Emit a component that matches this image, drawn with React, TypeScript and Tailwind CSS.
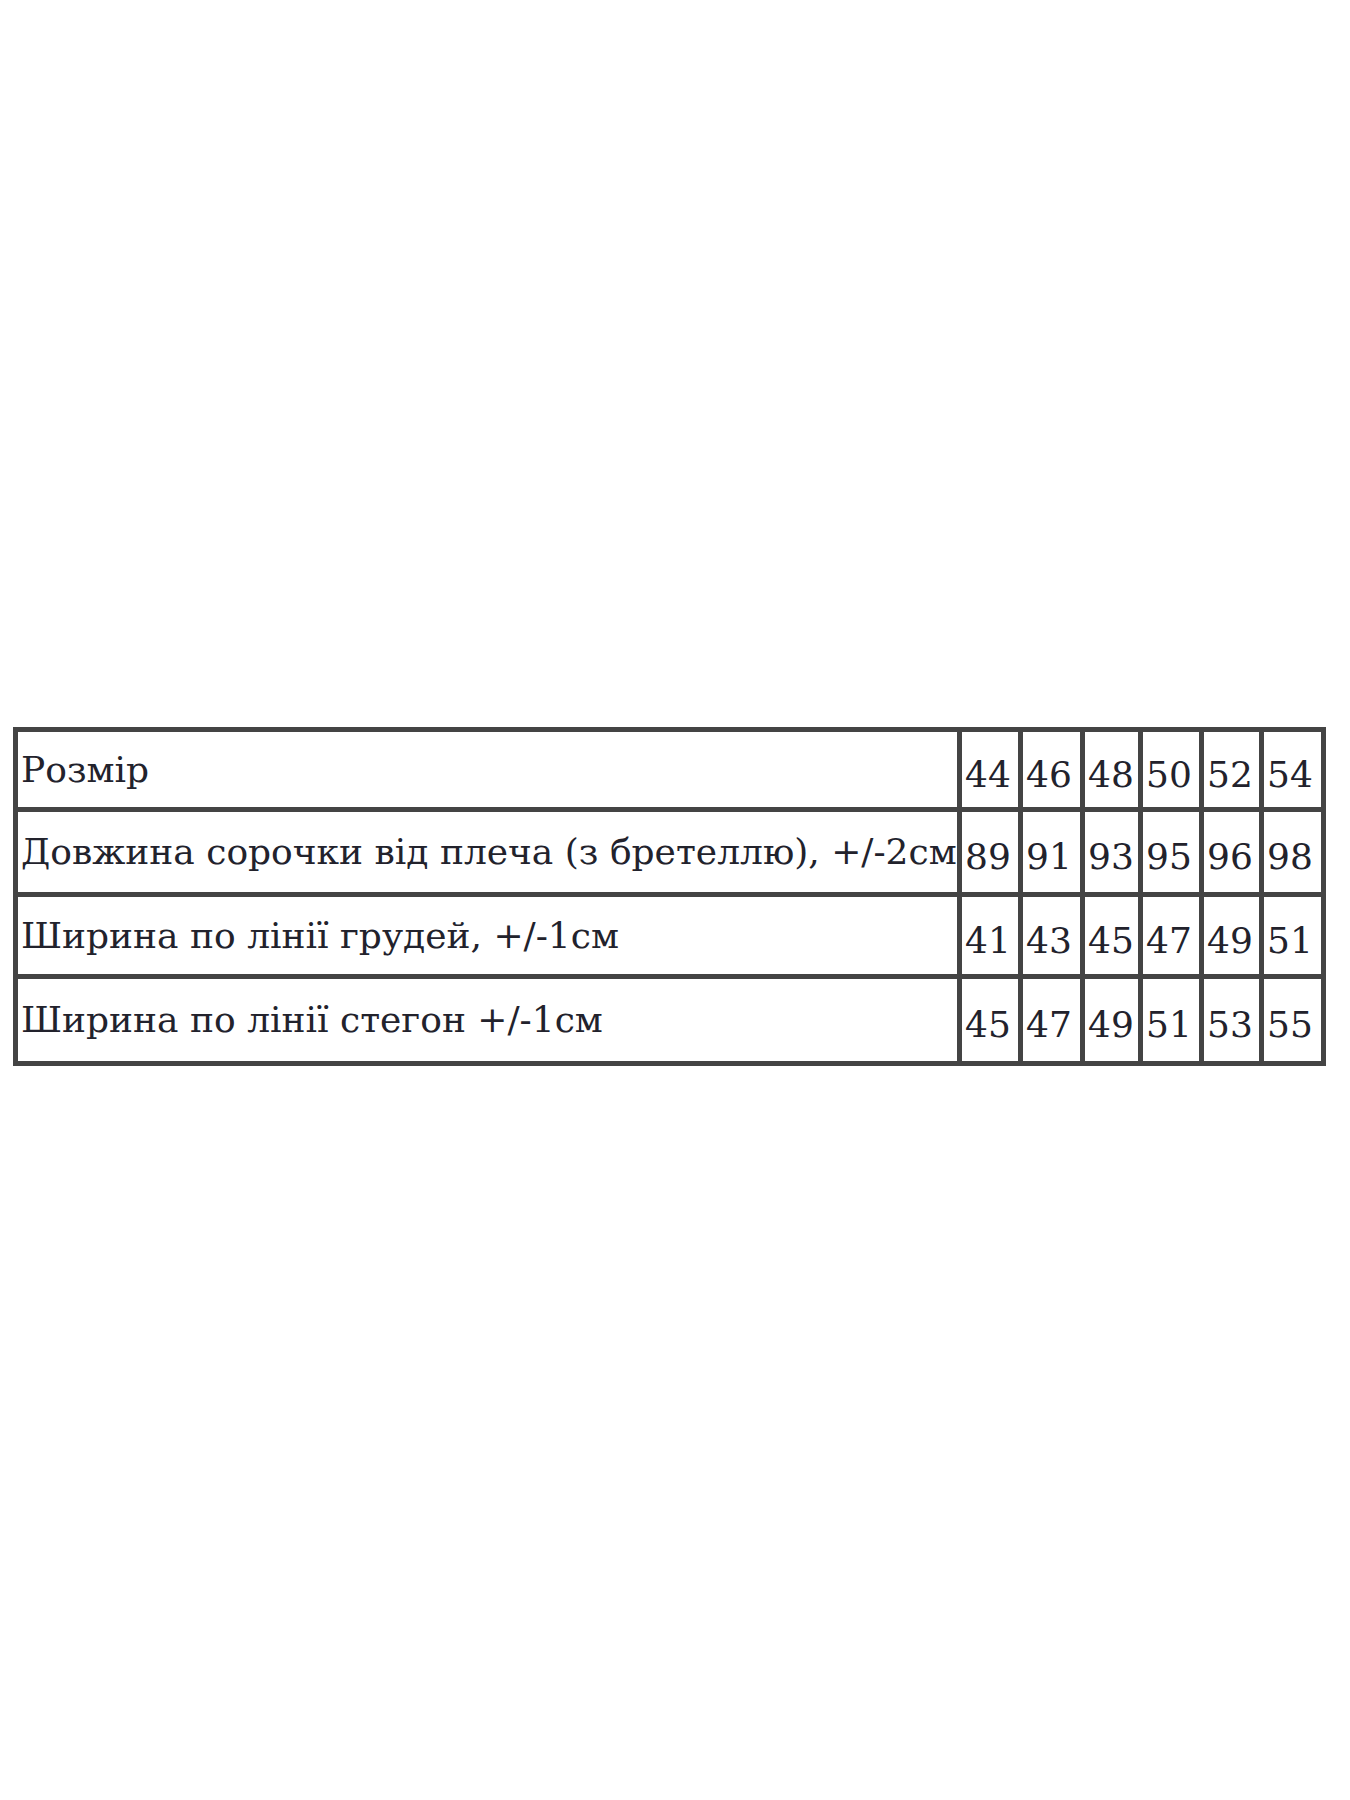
const sizes = ["44", "46", "48", "50", "52", "54"]

const rows = [
  { label: "Довжина сорочки від плеча (з бретеллю), +/-2см", values: ["89", "91", "93", "95", "96", "98"], h: "h-[85px]" },
  { label: "Ширина по лінії грудей, +/-1см", values: ["41", "43", "45", "47", "49", "51"], h: "h-[82px]" },
  { label: "Ширина по лінії стегон +/-1см", values: ["45", "47", "49", "51", "53", "55"], h: "h-[87px]" },
]

// column widths measured center-to-center of the grid lines
const widths = ["w-[61px]", "w-[62px]", "w-[58px]", "w-[61px]", "w-[60px]", "w-[62px]"]

const cell = "border-[5px] border-[#444] px-[3px] text-[36px] leading-none whitespace-nowrap overflow-hidden"

export default function App() {
  return (
    <div className="min-h-screen bg-white pt-[727px] pl-[13px] font-['DejaVu_Serif',serif] text-[#22222c]">
      <table className="table-fixed border-collapse border-[5px] border-[#444] w-[1313px]">
        <colgroup>
          <col className="w-[944px]" />
          {widths.map((w, i) => (
            <col key={i} className={w} />
          ))}
        </colgroup>
        <tbody>
          <tr className="h-[80px]">
            <td className={cell}>Розмір</td>
            {sizes.map((s) => (
              <td key={s} className={`${cell} pt-[10px]`}>
                {s}
              </td>
            ))}
          </tr>
          {rows.map((r) => (
            <tr key={r.label} className={r.h}>
              <td className={cell}>{r.label}</td>
              {r.values.map((v, i) => (
                <td key={i} className={`${cell} pt-[10px]`}>
                  {v}
                </td>
              ))}
            </tr>
          ))}
        </tbody>
      </table>
    </div>
  )
}
